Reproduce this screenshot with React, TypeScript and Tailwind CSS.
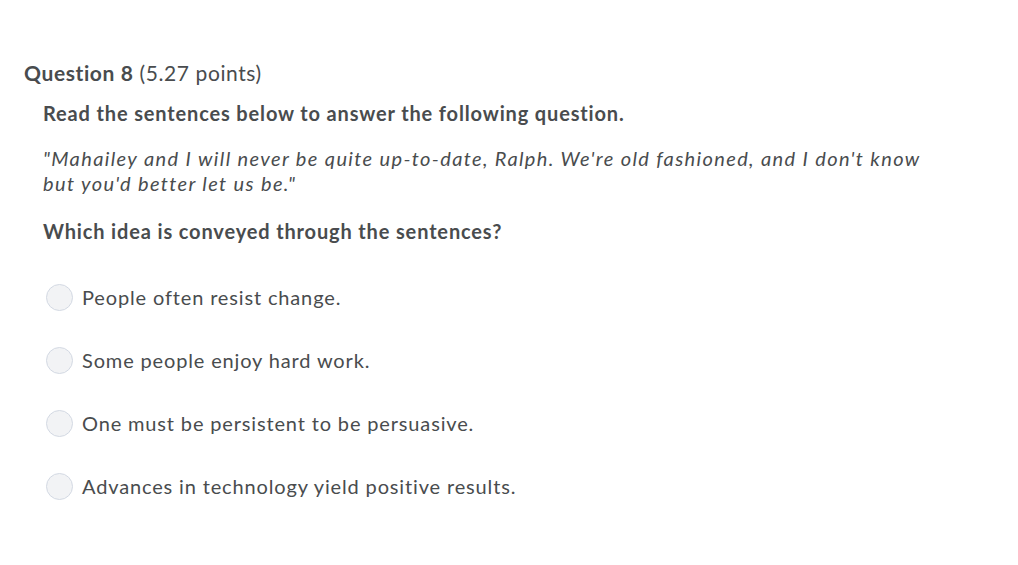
export default function App() {
  const options = [
    "People often resist change.",
    "Some people enjoy hard work.",
    "One must be persistent to be persuasive.",
    "Advances in technology yield positive results.",
  ]

  return (
    <div className="w-[1018px] h-[565px] bg-white text-[#494c4e] font-['Lato',sans-serif]">
      <div className="pt-[60px] pl-[24px]">
        {/* Question header */}
        <h2 className="text-[21px] leading-[26px] tracking-[0.6px]">
          <span className="font-bold">Question 8</span>{" "}
          <span className="font-normal">(5.27 points)</span>
        </h2>

        <div className="pl-[19px] pr-[80px] text-[20px] tracking-[0.85px]">
          <p className="mt-[15px] leading-[25px] font-bold">
            Read the sentences below to answer the following question.
          </p>
          <p className="mt-[20px] leading-[25px] italic tracking-[1.37px]">
            "Mahailey and I will never be quite up-to-date, Ralph. We're old fashioned, and I don't know but you'd
            better let us be."
          </p>
          <p className="mt-[23px] leading-[25px] font-bold">Which idea is conveyed through the sentences?</p>

          {/* Answer options */}
          <div className="mt-[40px] flex flex-col gap-[36px]">
            {options.map((option, index) => (
              <label key={index} className="flex items-center gap-[9px] cursor-pointer">
                <span className="w-[27px] h-[27px] ml-[3px] rounded-full border border-[#d3d9e3] bg-[#f2f3f5] shrink-0"></span>
                <span className="leading-[27px]">{option}</span>
              </label>
            ))}
          </div>
        </div>
      </div>
    </div>
  )
}
